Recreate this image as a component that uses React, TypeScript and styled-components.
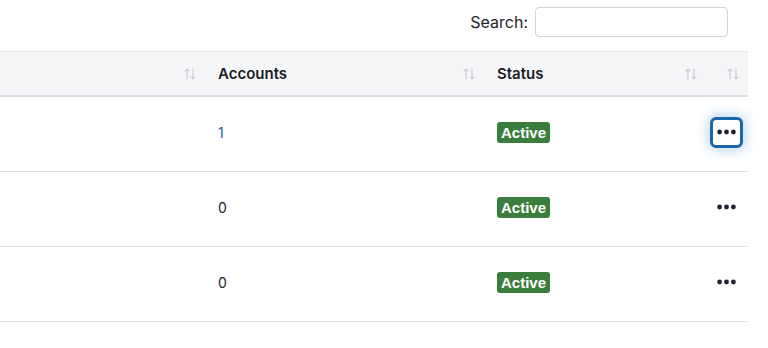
import styled, { createGlobalStyle } from "styled-components";

const GlobalStyle = createGlobalStyle`
  html, body {
    margin: 0;
    padding: 0;
    background: #ffffff;
    font-family: "Inter", "Noto Sans", sans-serif;
    color: #212529;
  }
`;

type Row = { accounts: number; linked: boolean };

const rows: Row[] = [
  { accounts: 1, linked: true },
  { accounts: 0, linked: false },
  { accounts: 0, linked: false },
];

const SortIcon = () => (
  <SortGlyph width="14" height="14" viewBox="0 0 14 14" aria-hidden="true">
    <path d="M4 12.5V2M1.8 4.3L4 2l2.2 2.3" fill="none" stroke="#c7cad0" strokeWidth="1.1" />
    <path d="M10 1.5V12M7.8 9.7L10 12l2.2-2.3" fill="none" stroke="#c7cad0" strokeWidth="1.1" />
  </SortGlyph>
);

const DotsIcon = () => (
  <svg width="19" height="6" viewBox="0 0 19 6" aria-hidden="true">
    <circle cx="2.6" cy="3" r="2.4" fill="#1f232b" />
    <circle cx="9.5" cy="3" r="2.4" fill="#1f232b" />
    <circle cx="16.4" cy="3" r="2.4" fill="#1f232b" />
  </svg>
);

const App = () => {
  return (
    <Page>
      <GlobalStyle />
      <Toolbar>
        <SearchLabel>
          Search:
          <SearchInput type="search" />
        </SearchLabel>
      </Toolbar>
      <Table>
        <colgroup>
          <col style={{ width: 205 }} />
          <col style={{ width: 279 }} />
          <col style={{ width: 222 }} />
          <col style={{ width: 42 }} />
        </colgroup>
        <thead>
          <tr>
            <HeadCell>
              <HeadInner><span /><SortIcon /></HeadInner>
            </HeadCell>
            <HeadCell>
              <HeadInner><span>Accounts</span><SortIcon /></HeadInner>
            </HeadCell>
            <HeadCell>
              <HeadInner><span>Status</span><SortIcon /></HeadInner>
            </HeadCell>
            <HeadCell $compact>
              <HeadInner><span /><SortIcon /></HeadInner>
            </HeadCell>
          </tr>
        </thead>
        <tbody>
          {rows.map((row, i) => (
            <tr key={i}>
              <Cell />
              <Cell>
                {row.linked ? <AccountLink href="#">{row.accounts}</AccountLink> : row.accounts}
              </Cell>
              <Cell>
                <Badge>Active</Badge>
              </Cell>
              <Cell $compact>
                <ActionButton type="button" $focused={i === 0}>
                  <DotsIcon />
                </ActionButton>
              </Cell>
            </tr>
          ))}
        </tbody>
      </Table>
    </Page>
  );
};

const Page = styled.div`
  width: 768px;
  height: 348px;
  overflow: hidden;
`;

const Toolbar = styled.div`
  display: flex;
  justify-content: flex-end;
  align-items: center;
  height: 43px;
  padding-right: 40px;
  margin-bottom: 8px;
`;

const SearchLabel = styled.label`
  display: flex;
  align-items: center;
  gap: 7px;
  font-size: 16px;
  color: #212529;
`;

const SearchInput = styled.input`
  width: 193px;
  height: 30px;
  box-sizing: border-box;
  border: 1px solid #ced4da;
  border-radius: 4px;
  background: #fff;
  outline: none;
`;

const Table = styled.table`
  width: 748px;
  border-collapse: collapse;
  table-layout: fixed;
`;

const HeadCell = styled.th<{ $compact?: boolean }>`
  height: 43px;
  padding: ${(p) => (p.$compact ? "0 8px 0 4px" : "0 8px 0 13px")};
  background: #f5f6f8;
  border-top: 1px solid #e3e5e9;
  border-bottom: 2px solid #dcdee3;
  font-size: 15px;
  font-weight: 600;
  text-align: left;
  color: #1b1e24;
`;

const HeadInner = styled.div`
  display: flex;
  align-items: center;
  justify-content: space-between;
`;

const SortGlyph = styled.svg`
  flex: none;
`;

const Cell = styled.td<{ $compact?: boolean }>`
  height: 75px;
  box-sizing: border-box;
  padding: ${(p) => (p.$compact ? "0 5px 3px 4px" : "0 10px 3px 13px")};
  border-bottom: 1px solid #dfe1e5;
  font-size: 14px;
  color: #212529;
  vertical-align: middle;
  text-align: left;
`;

const AccountLink = styled.a`
  color: #1d5fa7;
  text-decoration: none;
`;

const Badge = styled.span`
  display: inline-block;
  padding: 3px 4px;
  border-radius: 3px;
  background: #3a7d3c;
  color: #ffffff;
  font-family: "Liberation Sans", Arial, sans-serif;
  font-size: 15px;
  font-weight: 700;
  line-height: 15px;
`;

const ActionButton = styled.button<{ $focused?: boolean }>`
  display: flex;
  align-items: center;
  justify-content: center;
  width: 33px;
  height: 31px;
  padding: 0;
  box-sizing: border-box;
  background: #ffffff;
  border: 3px solid ${(p) => (p.$focused ? "#1769ab" : "transparent")};
  border-radius: 6px;
  box-shadow: ${(p) => (p.$focused ? "0 0 12px 3px rgba(40, 130, 210, 0.28)" : "none")};
  cursor: pointer;
`;

export default App;
